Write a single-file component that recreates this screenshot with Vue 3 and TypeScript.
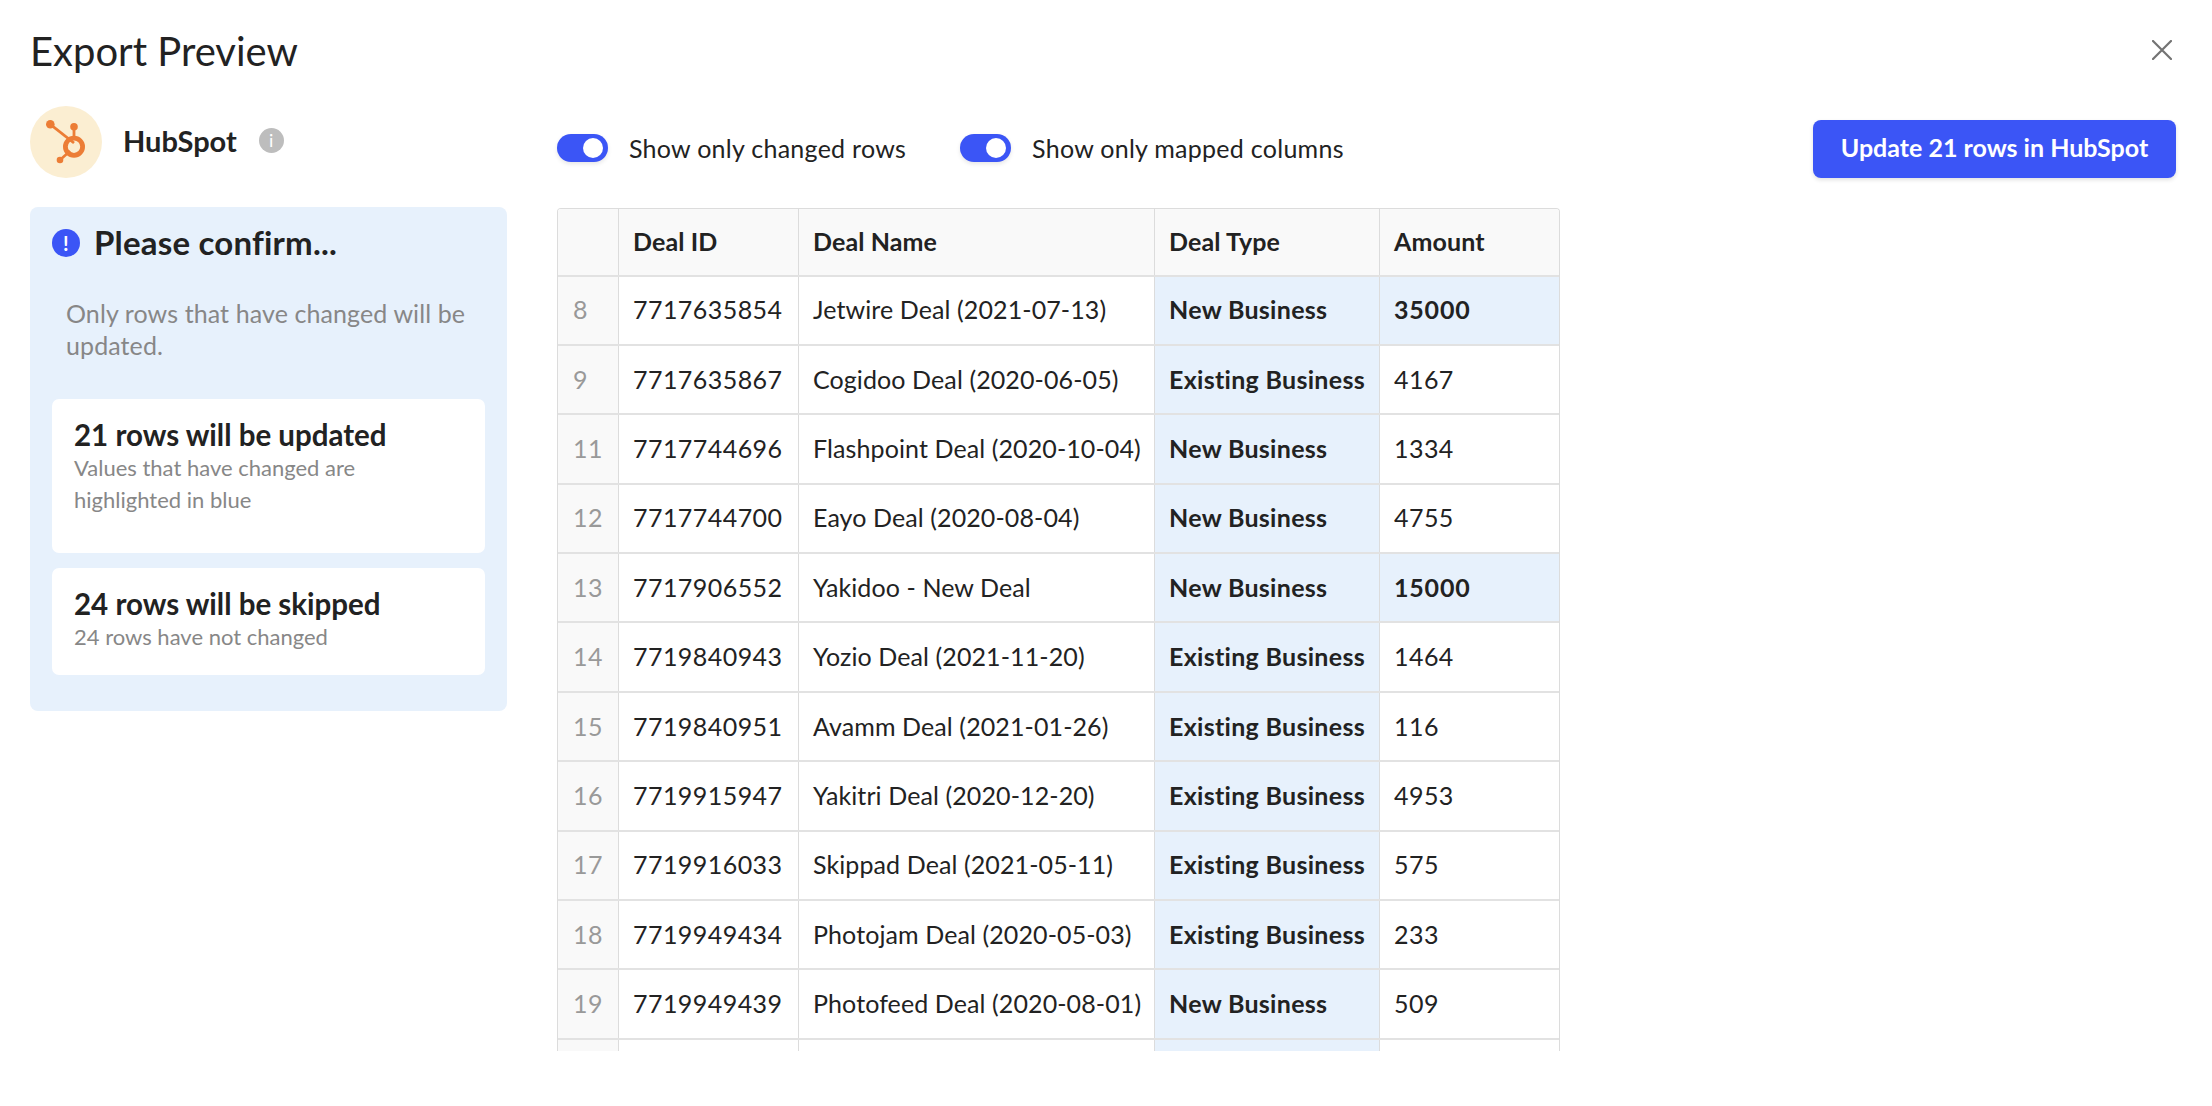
<template>
  <div class="page">
    <header class="header">
      <h1 class="title">Export Preview</h1>
      <svg class="close" viewBox="0 0 20 20" width="20" height="20">
        <path d="M1 1L19 19M19 1L1 19" stroke="#737373" stroke-width="2.2" stroke-linecap="round" />
      </svg>
    </header>

    <div class="body">
      <aside class="sidebar">
        <div class="source">
          <div class="avatar">
            <svg viewBox="0 0 72 72" width="72" height="72">
              <g fill="#ec7d36">
                <circle cx="20.3" cy="18.3" r="4.3" />
                <circle cx="44" cy="20.7" r="3.8" />
                <circle cx="30" cy="54" r="3.3" />
              </g>
              <g fill="none" stroke="#ec7d36">
                <path d="M20.3 18.3L44 37" stroke-width="2.8" />
                <path d="M44 20.7V34" stroke-width="2.8" />
                <path d="M30 54L40 45" stroke-width="2.6" />
                <circle cx="44" cy="40.7" r="8.6" stroke-width="4.8" />
              </g>
            </svg>
          </div>
          <span class="source-name">HubSpot</span>
          <span class="info">i</span>
        </div>

        <div class="confirm">
          <div class="confirm-head">
            <span class="alert">!</span>
            <span>Please confirm...</span>
          </div>
          <p class="confirm-text">Only rows that have changed will be updated.</p>
          <div class="card card-first">
            <div class="card-title">21 rows will be updated</div>
            <div class="card-sub">Values that have changed are<br />highlighted in blue</div>
          </div>
          <div class="card card-second">
            <div class="card-title">24 rows will be skipped</div>
            <div class="card-sub">24 rows have not changed</div>
          </div>
        </div>
      </aside>

      <main class="main">
        <div class="toolbar">
          <div class="toggles">
            <label class="toggle-row"><span class="toggle"><i></i></span>Show only changed rows</label>
            <label class="toggle-row"><span class="toggle"><i></i></span>Show only mapped columns</label>
          </div>
          <button class="update">Update 21 rows in HubSpot</button>
        </div>

        <div class="table">
          <div class="row head">
            <div class="cell num"></div>
            <div class="cell">Deal ID</div>
            <div class="cell">Deal Name</div>
            <div class="cell">Deal Type</div>
            <div class="cell">Amount</div>
          </div>
          <div v-for="r in rows" :key="r.n" class="row">
            <div class="cell num digits">{{ r.n }}</div>
            <div class="cell digits">{{ r.id }}</div>
            <div class="cell">{{ r.name }}</div>
            <div class="cell changed">{{ r.type }}</div>
            <div class="cell digits" :class="{ changed: r.hit }">{{ r.amount }}</div>
          </div>
          <div class="row">
            <div class="cell num"></div>
            <div class="cell"></div>
            <div class="cell"></div>
            <div class="cell changed"></div>
            <div class="cell"></div>
          </div>
        </div>
      </main>
    </div>
  </div>
</template>

<script setup lang="ts">
interface Row {
  n: number
  id: string
  name: string
  type: string
  amount: string
  hit?: boolean
}

const rows: Row[] = [
  { n: 8, id: '7717635854', name: 'Jetwire Deal (2021-07-13)', type: 'New Business', amount: '35000', hit: true },
  { n: 9, id: '7717635867', name: 'Cogidoo Deal (2020-06-05)', type: 'Existing Business', amount: '4167' },
  { n: 11, id: '7717744696', name: 'Flashpoint Deal (2020-10-04)', type: 'New Business', amount: '1334' },
  { n: 12, id: '7717744700', name: 'Eayo Deal (2020-08-04)', type: 'New Business', amount: '4755' },
  { n: 13, id: '7717906552', name: 'Yakidoo - New Deal', type: 'New Business', amount: '15000', hit: true },
  { n: 14, id: '7719840943', name: 'Yozio Deal (2021-11-20)', type: 'Existing Business', amount: '1464' },
  { n: 15, id: '7719840951', name: 'Avamm Deal (2021-01-26)', type: 'Existing Business', amount: '116' },
  { n: 16, id: '7719915947', name: 'Yakitri Deal (2020-12-20)', type: 'Existing Business', amount: '4953' },
  { n: 17, id: '7719916033', name: 'Skippad Deal (2021-05-11)', type: 'Existing Business', amount: '575' },
  { n: 18, id: '7719949434', name: 'Photojam Deal (2020-05-03)', type: 'Existing Business', amount: '233' },
  { n: 19, id: '7719949439', name: 'Photofeed Deal (2020-08-01)', type: 'New Business', amount: '509' },
]
</script>

<style>
body {
  background: #fff;
}
</style>

<style scoped>
.page {
  height: 1106px;
  box-sizing: border-box;
  padding: 0 36px 0 30px;
  overflow: hidden;
  font-family: 'Lato', 'Liberation Sans', sans-serif;
  font-size: 25px;
  color: #222;
}

.header {
  display: flex;
  align-items: center;
  justify-content: space-between;
  height: 102px;
}

.title {
  margin: 0;
  font-size: 40px;
  font-weight: 400;
}

.close {
  margin-right: 4px;
  margin-top: -3px;
}

.body {
  display: flex;
}

.sidebar {
  width: 477px;
  flex-shrink: 0;
  margin-top: 4px;
}

.source {
  display: flex;
  align-items: center;
  height: 72px;
  margin-bottom: 29px;
}

.avatar {
  width: 72px;
  height: 72px;
  border-radius: 50%;
  background: #fbeed2;
}

.avatar svg {
  display: block;
}

.source-name {
  margin-left: 21px;
  margin-bottom: 3px;
  font-size: 29px;
  font-weight: 700;
}

.info {
  width: 25px;
  height: 25px;
  margin-left: 22px;
  margin-bottom: 3px;
  border-radius: 50%;
  background: #bdbdbd;
  color: #fff;
  font-size: 18px;
  line-height: 25px;
  text-align: center;
}

.confirm {
  height: 504px;
  box-sizing: border-box;
  padding: 22px 22px 0;
  border-radius: 8px;
  background: #e7f1fc;
}

.confirm-head {
  display: flex;
  align-items: center;
  gap: 14px;
  height: 28px;
  font-size: 33px;
  font-weight: 700;
  letter-spacing: 0.2px;
}

.confirm-head > span:last-child {
  margin-top: -2px;
}

.alert {
  width: 28px;
  height: 28px;
  border-radius: 50%;
  background: #3b55f6;
  color: #fff;
  font-size: 20px;
  line-height: 28px;
  text-align: center;
}

.confirm-text {
  margin: 40px 14px 0;
  color: #878787;
  font-size: 25px;
  line-height: 32px;
  letter-spacing: 0.1px;
}

.card {
  box-sizing: border-box;
  padding: 19px 22px 0;
  border-radius: 7px;
  background: #fff;
}

.card-first {
  height: 154px;
  margin-top: 38px;
}

.card-second {
  height: 107px;
  margin-top: 15px;
}

.card-title {
  font-size: 29.5px;
  font-weight: 700;
  line-height: 34px;
}

.card-sub {
  color: #878787;
  font-size: 22px;
  line-height: 32px;
}

.main {
  flex: 1;
  min-width: 0;
  margin-left: 50px;
}

.toolbar {
  display: flex;
  align-items: center;
  justify-content: space-between;
  margin-top: 18px;
  margin-bottom: 29.5px;
}

.toggles {
  display: flex;
  gap: 54px;
  margin-bottom: 3px;
  letter-spacing: 0.27px;
}

.toggle-row {
  display: flex;
  align-items: center;
  gap: 21px;
}

.toggle {
  position: relative;
  width: 51px;
  height: 28px;
  border-radius: 14px;
  background: #3b55f6;
  box-shadow: 0 2px 4px rgba(0, 0, 0, 0.1);
}

.toggle i {
  position: absolute;
  top: 4px;
  right: 5px;
  width: 20px;
  height: 20px;
  border-radius: 50%;
  background: #fff;
}

.update {
  width: 363px;
  height: 58px;
  padding: 0 0 5px;
  border: 0;
  border-radius: 8px;
  background: #3b55f6;
  color: #fff;
  font-family: inherit;
  font-size: 25px;
  font-weight: 700;
  box-shadow: 0 2px 4px rgba(0, 0, 0, 0.12);
}

.table {
  width: 1003px;
  height: 843px;
  overflow: hidden;
  box-sizing: border-box;
  border: 1px solid #dcdcdc;
  border-bottom: 0;
  border-radius: 4px 4px 0 0;
}

.row {
  display: grid;
  grid-template-columns: 60px 180px 356px 225px 1fr;
  height: 69.4px;
  box-sizing: border-box;
  border-bottom: 2px solid #e2e2e2;
}

.head {
  height: 68px;
  background: #f9f9f9;
  font-weight: 700;
}

.cell {
  display: flex;
  align-items: center;
  box-sizing: border-box;
  padding-left: 14px;
  padding-bottom: 2px;
  border-left: 1px solid #dcdcdc;
  letter-spacing: 0.1px;
}

.cell:first-child {
  border-left: 0;
}

.num {
  padding-left: 15px;
  background: #f9f9f9;
  color: #999;
}

.digits {
  letter-spacing: 0.45px;
}

.changed {
  background: #e7f1fc;
  font-weight: 700;
  letter-spacing: 0.3px;
}

.digits.changed {
  letter-spacing: 0.8px;
}
</style>
